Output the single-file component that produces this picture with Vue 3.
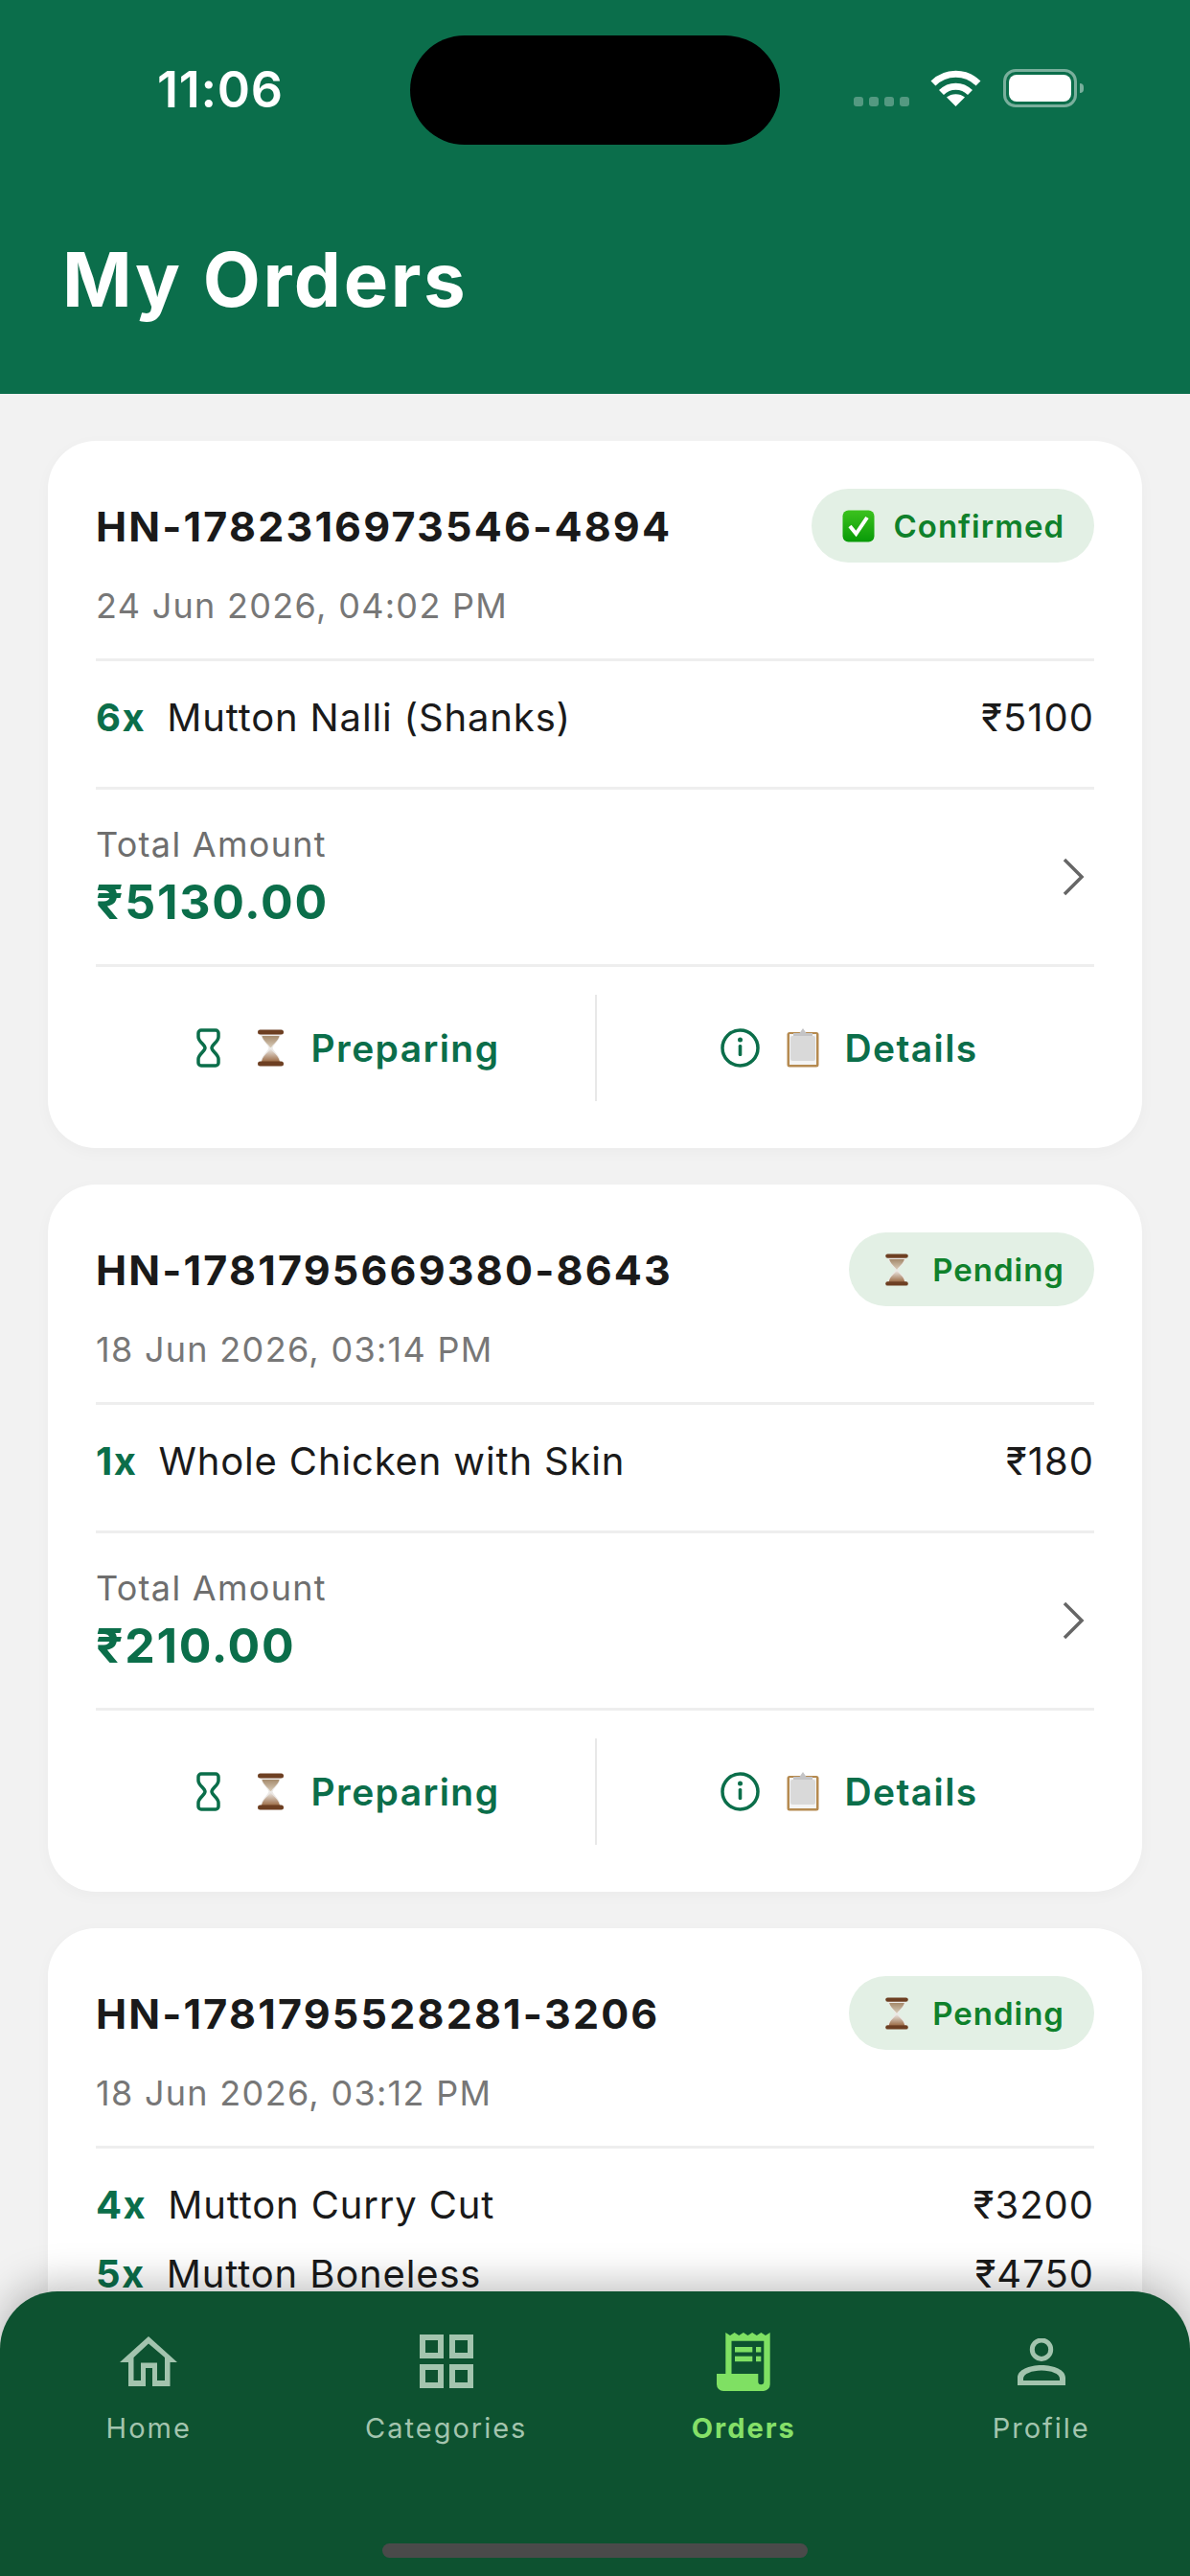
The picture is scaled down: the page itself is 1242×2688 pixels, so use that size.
<script setup>
const orders = [
  {
    id: "HN-1782316973546-4894",
    date: "24 Jun 2026, 04:02 PM",
    status: "Confirmed",
    items: [{ qty: 6, name: "Mutton Nalli (Shanks)", price: 5100 }],
    total: "5130.00",
  },
  {
    id: "HN-1781795669380-8643",
    date: "18 Jun 2026, 03:14 PM",
    status: "Pending",
    items: [{ qty: 1, name: "Whole Chicken with Skin", price: 180 }],
    total: "210.00",
  },
  {
    // rest of this card sits under the tab bar
    id: "HN-1781795528281-3206",
    date: "18 Jun 2026, 03:12 PM",
    status: "Pending",
    items: [
      { qty: 4, name: "Mutton Curry Cut", price: 3200 },
      { qty: 5, name: "Mutton Boneless", price: 4750 },
    ],
  },
];
</script>

<template>
  <div class="screen">
    <svg class="defs" width="0" height="0" aria-hidden="true">
      <defs>
        <linearGradient id="sandTop" x1="0" y1="0" x2="0" y2="1">
          <stop offset="0" stop-color="#a58a6c" />
          <stop offset="1" stop-color="#d8cbb8" />
        </linearGradient>
        <linearGradient id="sandBottom" x1="0" y1="0" x2="0" y2="1">
          <stop offset="0" stop-color="#e9e5e0" />
          <stop offset="1" stop-color="#9b6b45" />
        </linearGradient>
        <linearGradient id="checkGreen" x1="0" y1="0" x2="0" y2="1">
          <stop offset="0" stop-color="#3cc21e" />
          <stop offset="1" stop-color="#089a08" />
        </linearGradient>
        <symbol id="sandglass" viewBox="0 0 27 39">
          <path d="M3 4 H24 C24 11 17 15 15.5 19.5 C17 24 24 28 24 35 H3 C3 28 10 24 11.5 19.5 C10 15 3 11 3 4 Z" fill="#ece9e6" />
          <path d="M4.5 7 H22.5 C21.5 12 16 15.5 14 19 H13 C11 15.5 5.500 12 4.500 7 Z" fill="url(#sandTop)" />
          <path d="M13 21 H14 C17 25 22 28 23 34 H4 C5 28 10 25 13 21 Z" fill="url(#sandBottom)" />
          <rect x="0" y="0.5" width="27" height="5" rx="2.500" fill="#6d3f22" />
          <rect x="0" y="33.500" width="27" height="5" rx="2.500" fill="#6d3f22" />
        </symbol>
      </defs>
    </svg>

    <header class="top">
      <div class="status-bar">
        <span class="time">11:06</span>
        <div class="island"></div>
        <div class="status-icons">
          <div class="signal"><i></i><i></i><i></i><i></i></div>
          <svg class="wifi" viewBox="0 0 53 39">
            <path d="M3 15 C16 2 37 2 50 15" fill="none" stroke="#fff" stroke-width="7" />
            <path d="M11.500 24.500 C20 16 33 16 41.500 24.500" fill="none" stroke="#fff" stroke-width="7" />
            <path d="M26.500 39 L17 29.500 C22 25 31 25 36 29.500 Z" fill="#fff" />
          </svg>
          <div class="battery"><div class="battery-fill"></div></div>
          <div class="battery-nub"></div>
        </div>
      </div>
      <h1 class="page-title">My Orders</h1>
    </header>

    <main class="list">
      <article v-for="order in orders" :key="order.id" class="card">
        <div class="card-head">
          <span class="order-id">{{ order.id }}</span>
          <span class="badge">
            <svg v-if="order.status === 'Confirmed'" class="badge-check" viewBox="0 0 34 34">
              <rect x="0.500" y="0.500" width="33" height="33" rx="6" fill="url(#checkGreen)" />
              <path d="M8 17 L14.500 25 L26 8" fill="none" stroke="#fff" stroke-width="4" />
            </svg>
            <svg v-else class="badge-glass"><use href="#sandglass" /></svg>
            {{ order.status }}
          </span>
        </div>
        <p class="order-date">{{ order.date }}</p>

        <div class="items">
          <div v-for="item in order.items" :key="item.name" class="item">
            <span class="qty">{{ item.qty }}x</span>
            <span class="item-name">{{ item.name }}</span>
            <span class="item-price">₹{{ item.price }}</span>
          </div>
        </div>

        <template v-if="order.total">
          <div class="total-row">
            <div>
              <p class="total-label">Total Amount</p>
              <p class="total-value">₹{{ order.total }}</p>
            </div>
            <svg class="chevron" viewBox="0 0 24 40">
              <path d="M3 2 L21 20 L3 38" fill="none" stroke="#666" stroke-width="3.500" />
            </svg>
          </div>

          <div class="actions">
            <div class="action action--status">
              <svg class="hourglass" viewBox="0 0 25 41">
                <path
                  d="M5 2 H20 A3 3 0 0 1 23 5 V9 C23 14 16 17 16 20.500 C16 24 23 27 23 32 V36 A3 3 0 0 1 20 39 H5 A3 3 0 0 1 2 36 V32 C2 27 9 24 9 20.500 C9 17 2 14 2 9 V5 A3 3 0 0 1 5 2 Z"
                  fill="none"
                  stroke="#0b6e4a"
                  stroke-width="3.500"
                />
              </svg>
              <svg class="action-glass"><use href="#sandglass" /></svg>
              <span>Preparing</span>
            </div>
            <div class="action action--details">
              <svg class="info" viewBox="0 0 41 41">
                <circle cx="20.500" cy="20.500" r="18.500" fill="none" stroke="#0b6e4a" stroke-width="3.500" />
                <circle cx="20.500" cy="12" r="2.500" fill="#0b6e4a" />
                <rect x="18.700" y="17" width="3.600" height="12" rx="1.500" fill="#0b6e4a" />
              </svg>
              <svg class="clipboard" viewBox="0 0 34 41">
                <rect x="0.500" y="4" width="33" height="36.500" rx="2.500" fill="#b58a50" />
                <rect x="3" y="6" width="28" height="32" fill="#f4f4f4" />
                <rect x="4" y="8" width="26" height="26" rx="2" fill="#d9d9d9" />
                <path d="M17 0 L20.500 5 H27 V8 H7 V5 H13.500 Z" fill="#c4c4c6" />
              </svg>
              <span>Details</span>
            </div>
          </div>
        </template>
      </article>
    </main>

    <nav class="tabbar">
      <div class="tabs">
        <div class="tab">
          <div class="tab-icon">
            <svg width="60" height="52" viewBox="0 0 60 52">
              <path
                fill-rule="evenodd"
                fill="#a3c4ae"
                d="M30 0 L60 27 H52.500 V52 H34 V33 H27 V52 H9 V27 H0 Z M30 7.500 L14.500 22 V46 H22 V27.500 H39 V46 H47 V22 Z"
              />
            </svg>
          </div>
          <span>Home</span>
        </div>
        <div class="tab">
          <div class="tab-icon">
            <svg width="56" height="56" viewBox="0 0 56 56">
              <g fill="none" stroke="#a3c4ae" stroke-width="6">
                <rect x="3" y="3" width="19" height="19" />
                <rect x="34" y="3" width="19" height="19" />
                <rect x="3" y="34" width="19" height="19" />
                <rect x="34" y="34" width="19" height="19" />
              </g>
            </svg>
          </div>
          <span>Categories</span>
        </div>
        <div class="tab tab--active">
          <div class="tab-icon">
            <svg width="56" height="61" viewBox="0 0 56 61">
              <path
                fill-rule="evenodd"
                fill="#7fe063"
                d="M9.300 0 L14 3 L18.600 0 L23.200 3 L27.900 0 L32.500 3 L37.100 0 L41.800 3 L46.400 0 L51 3 L55.700 0 V54 A7 7 0 0 1 49 61 H7 A7 7 0 0 1 0 54 V43 H9.300 Z M15.500 8.700 V43 H43.300 V51.300 A3 3 0 0 0 49.300 51.300 V8.700 Z"
              />
              <g fill="#7fe063">
                <rect x="19" y="15" width="18.300" height="5.500" />
                <rect x="19" y="24.700" width="18.300" height="5.500" />
                <rect x="41" y="15" width="5.300" height="5.500" />
                <rect x="41" y="24.700" width="5.300" height="5.500" />
              </g>
            </svg>
          </div>
          <span>Orders</span>
        </div>
        <div class="tab">
          <div class="tab-icon">
            <svg width="50" height="49" viewBox="0 0 50 49">
              <circle cx="25" cy="11.700" r="9.700" fill="none" stroke="#a3c4ae" stroke-width="5" />
              <path
                fill-rule="evenodd"
                fill="#a3c4ae"
                d="M0 49 V41 C0 33 12 28 25 28 S50 33 50 41 V49 Z M6 44 H44 V42 C44 37 35 33.500 25 33.500 S6 37 6 42 Z"
              />
            </svg>
          </div>
          <span>Profile</span>
        </div>
      </div>
      <div class="home-indicator"></div>
    </nav>
  </div>
</template>

<style>
html,
body {
  margin: 0;
  background: #f2f2f2;
}
</style>

<style scoped>
.screen {
  position: relative;
  width: 1242px;
  height: 2688px;
  overflow: hidden;
  background: #f2f2f2;
  font-family: Inter, "Liberation Sans", sans-serif;
  color: #1a1a1a;
}

.defs {
  position: absolute;
}

.top {
  height: 411px;
  background: #0b6e4b;
  box-sizing: border-box;
  padding-top: 37px;
  color: #fff;
}

.status-bar {
  display: flex;
  align-items: flex-start;
  height: 114px;
}

.time {
  width: 428px;
  box-sizing: border-box;
  padding: 27px 0 0 164px;
  font-size: 52px;
  line-height: 60px;
  font-weight: 600;
  letter-spacing: 0.700px;
}

.island {
  width: 386px;
  height: 114px;
  border-radius: 57px;
  background: #000;
}

.status-icons {
  display: flex;
  align-items: flex-start;
  padding: 35px 0 0 77px;
}

.signal {
  display: flex;
  gap: 6px;
  margin: 29px 22px 0 0;
}

.signal i {
  width: 10px;
  height: 10px;
  border-radius: 3px;
  background: rgba(255, 255, 255, 0.3);
}

.wifi {
  width: 53px;
  height: 39px;
  margin-right: 23px;
}

.battery {
  width: 77px;
  height: 40px;
  box-sizing: border-box;
  border: 3px solid rgba(255, 255, 255, 0.45);
  border-radius: 13px;
  padding: 3px;
}

.battery-fill {
  height: 100%;
  border-radius: 8px;
  background: #fff;
}

.battery-nub {
  width: 4px;
  height: 10px;
  margin: 15px 0 0 3px;
  border-radius: 0 5px 5px 0;
  background: rgba(255, 255, 255, 0.45);
}

.page-title {
  margin: 94px 0 0 65px;
  font-size: 78px;
  line-height: 94px;
  font-weight: 700;
  letter-spacing: 2.600px;
}

.list {
  display: flex;
  flex-direction: column;
  gap: 38px;
  padding: 49px 50px 0;
}

.card {
  flex: none;
  box-sizing: border-box;
  padding: 50px 50px 49px;
  border-radius: 50px;
  background: #fff;
  box-shadow: 0 4px 16px rgba(0, 0, 0, 0.03);
}

.card-head {
  display: flex;
  align-items: center;
  justify-content: space-between;
  height: 77px;
}

.order-id {
  font-size: 43px;
  font-weight: 700;
  letter-spacing: 2.200px;
}

.badge {
  display: flex;
  align-items: center;
  gap: 20px;
  height: 77px;
  box-sizing: border-box;
  padding: 0 31px 0 32px;
  border-radius: 39px;
  background: #e3f0e5;
  color: #0f812b;
  font-size: 33px;
  font-weight: 600;
  letter-spacing: 1px;
}

.badge-check {
  width: 34px;
  height: 34px;
}

.badge-glass {
  width: 24px;
  height: 34px;
  margin: 0 5px 0 6px;
}

.order-date {
  margin: 23px 0 0;
  padding-bottom: 33px;
  border-bottom: 3px solid #eeeeee;
  font-size: 36px;
  line-height: 44px;
  color: #777;
  letter-spacing: 1.300px;
}

.items {
  display: flex;
  flex-direction: column;
  gap: 24px;
  padding: 34px 0 49px;
  border-bottom: 3px solid #eeeeee;
}

.item {
  display: flex;
  align-items: center;
  height: 48px;
  font-size: 40px;
  letter-spacing: 0.850px;
}

.qty {
  margin-right: 22px;
  color: #0b6e4a;
  font-weight: 700;
  letter-spacing: 1.500px;
}

.item-price {
  margin-left: auto;
  letter-spacing: 1px;
}

.total-row {
  display: flex;
  align-items: center;
  justify-content: space-between;
  height: 185px;
  box-sizing: border-box;
  padding-right: 10px;
  border-bottom: 3px solid #eeeeee;
}

.total-label {
  margin: 0;
  font-size: 36px;
  line-height: 44px;
  color: #6e6e6e;
  letter-spacing: 1.300px;
}

.total-value {
  margin: 8px 0 0;
  font-size: 50px;
  line-height: 60px;
  font-weight: 700;
  color: #0b6e4a;
  letter-spacing: 1.700px;
}

.chevron {
  width: 24px;
  height: 40px;
}

.actions {
  display: grid;
  grid-template-columns: 1fr 1fr;
  margin-top: 29px;
  height: 111px;
}

.action {
  display: flex;
  align-items: center;
  justify-content: center;
  font-size: 39px;
  font-weight: 600;
  letter-spacing: 1.400px;
  color: #0b6e4a;
}

.action--status {
  padding-left: 5px;
}

.action--details {
  padding-left: 8px;
  border-left: 2px solid #e8e8e8;
}

.hourglass {
  width: 25px;
  height: 41px;
  margin-right: 39px;
}

.action-glass {
  width: 27px;
  height: 39px;
  margin-right: 29px;
}

.info {
  width: 41px;
  height: 41px;
  margin-right: 28px;
}

.clipboard {
  width: 34px;
  height: 41px;
  margin-right: 26px;
}

.tabbar {
  position: absolute;
  left: 0;
  right: 0;
  bottom: 0;
  height: 297px;
  box-sizing: border-box;
  display: flex;
  flex-direction: column;
  justify-content: space-between;
  padding: 38px 0 19px;
  border-radius: 60px 60px 0 0;
  background: #0d5230;
  box-shadow: 0 -8px 40px rgba(0, 0, 0, 0.25);
}

.tabs {
  display: grid;
  grid-template-columns: repeat(4, 1fr);
}

.tab {
  display: flex;
  flex-direction: column;
  align-items: center;
  gap: 17px;
  color: #a3c4ae;
  font-size: 29px;
  line-height: 36px;
  letter-spacing: 2px;
}

.tab--active {
  color: #85e068;
  font-weight: 700;
}

.tab-icon {
  display: flex;
  align-items: center;
  justify-content: center;
  height: 70px;
}

.home-indicator {
  width: 444px;
  height: 15px;
  margin: 0 auto;
  border-radius: 8px;
  background: #4a4a4a;
}
</style>
